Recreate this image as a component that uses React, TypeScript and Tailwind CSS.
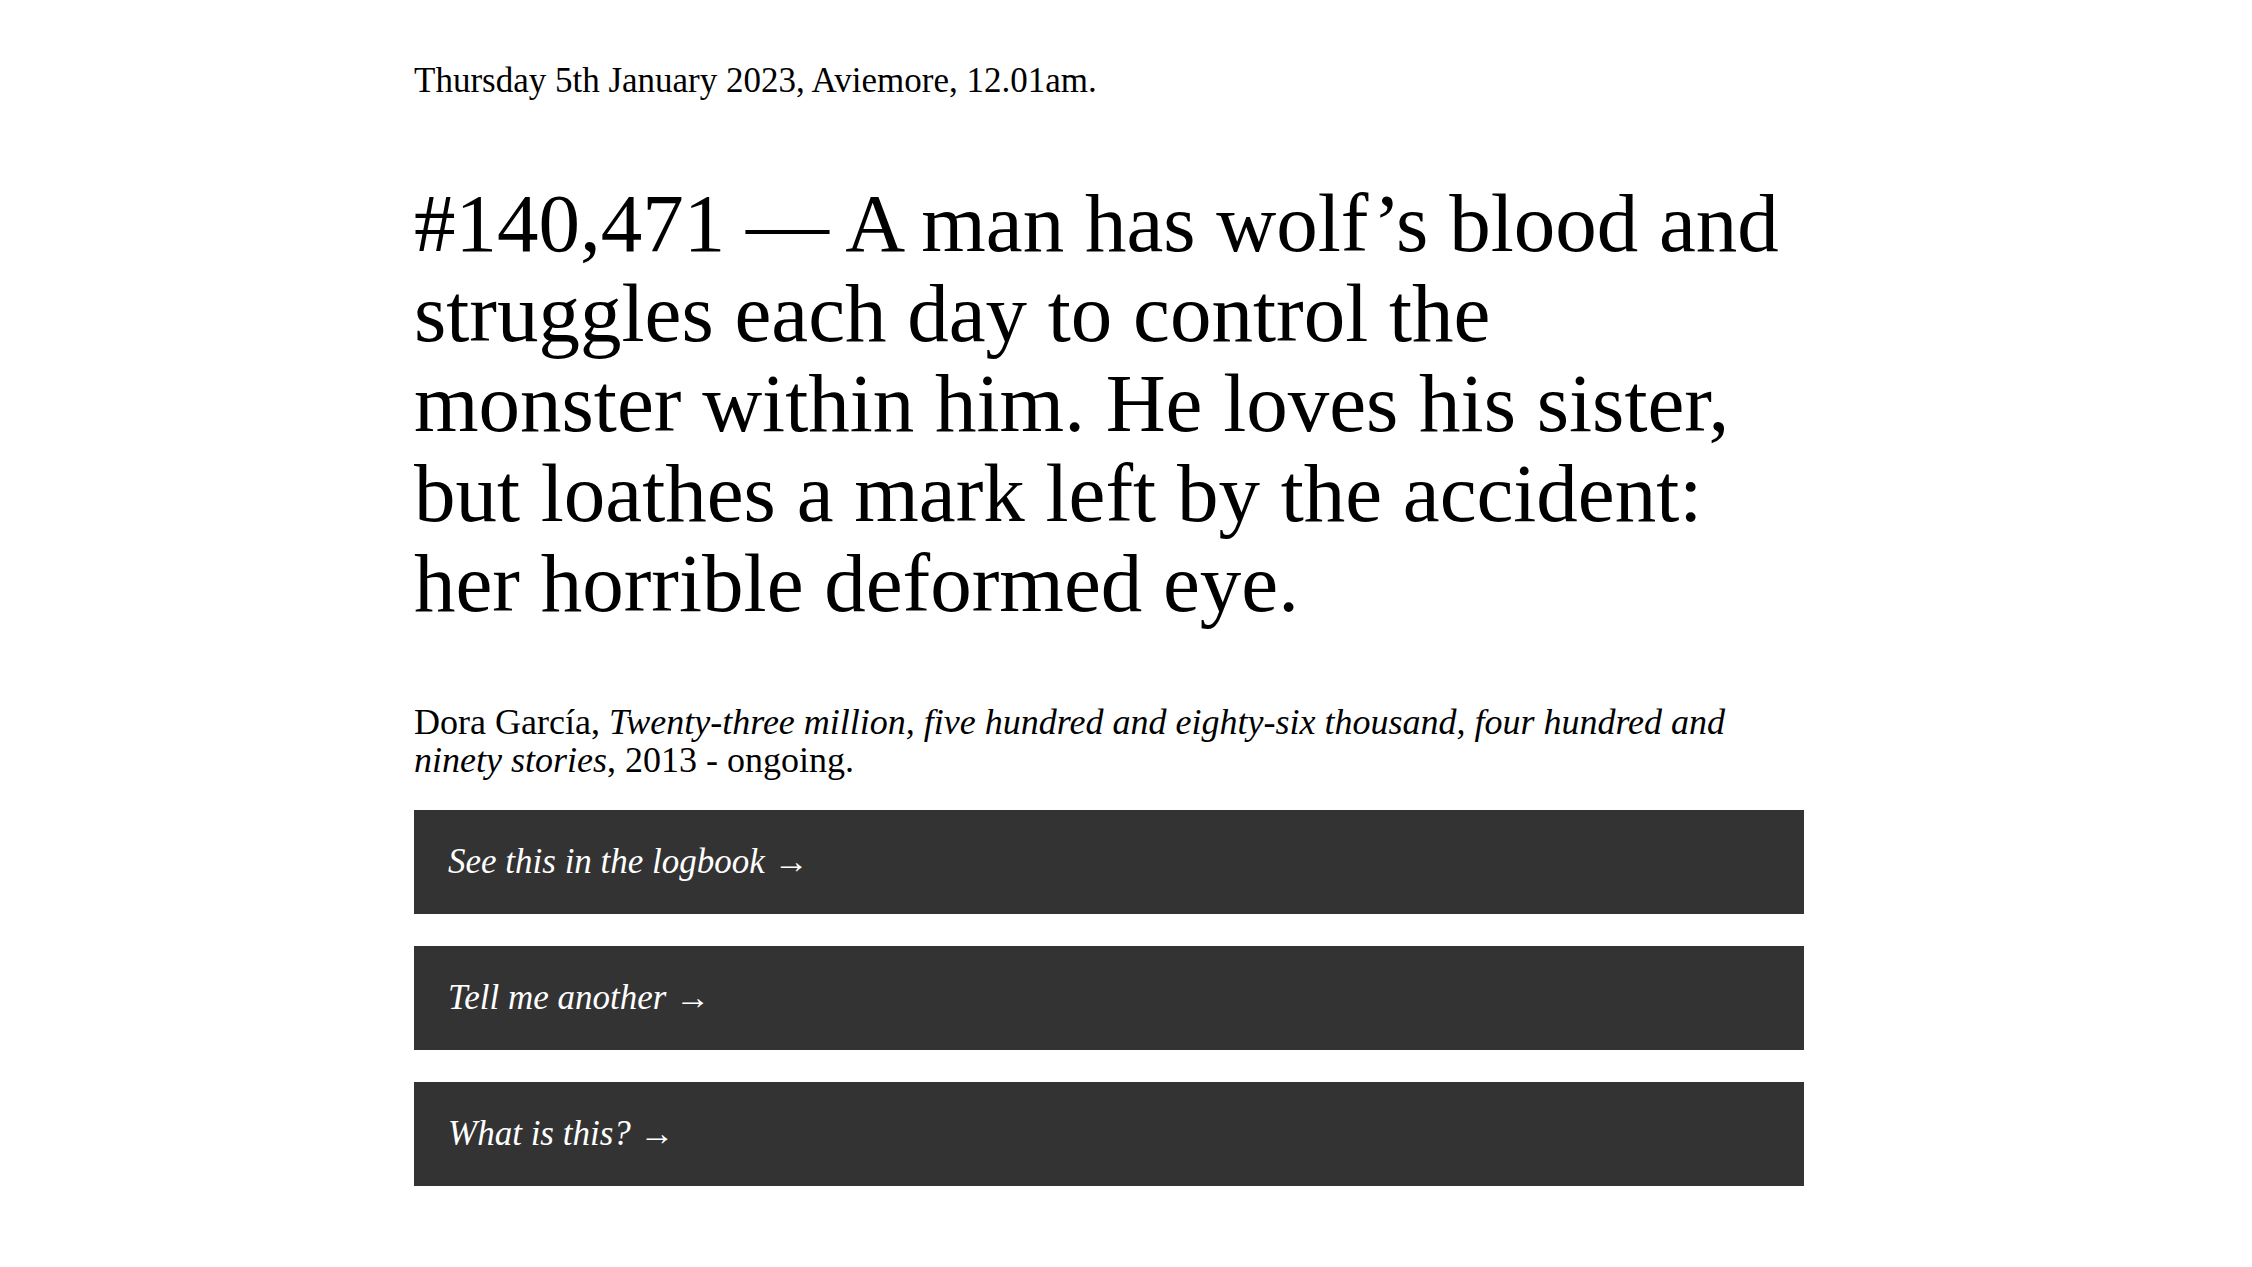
import React from 'react';

// story card page
const heading = [
  '#140,471 — A man has wolf’s blood and',
  'struggles each day to control the',
  'monster within him. He loves his sister,',
  'but loathes a mark left by the accident:',
  'her horrible deformed eye.',
];

const links = ['See this in the logbook', 'Tell me another', 'What is this?'];

const App: React.FC = () => {
  return (
    <div className="min-h-screen bg-white text-black font-['Liberation_Serif','Times_New_Roman',serif]">
      <div className="pl-[414px] pt-[55px] pb-20">
        <div className="w-[1390px]">
          {/* date + place */}
          <p className="text-[35px] leading-[51px]">Thursday 5th January 2023, Aviemore, 12.01am.</p>

          {/* the story */}
          <h1 className="mt-[72px] text-[83px] leading-[90px] font-normal">
            {heading.map((line, i) => (
              <span key={i} className="block whitespace-nowrap">
                {line}
              </span>
            ))}
          </h1>

          {/* citation */}
          <p className="mt-[75px] text-[36px] leading-[38px]">
            Dora García,{' '}
            <em>Twenty-three million, five hundred and eighty-six thousand, four hundred and</em>
            <br />
            <em>ninety stories</em>, 2013 - ongoing.
          </p>

          <div className="mt-[31px] flex flex-col gap-8">
            {links.map(label => (
              <a
                key={label}
                href="#"
                className="flex h-[104px] items-center bg-[#333333] px-[34px] text-[35px] italic text-white"
              >
                {label} →
              </a>
            ))}
          </div>
        </div>
      </div>
    </div>
  );
};

export default App;
